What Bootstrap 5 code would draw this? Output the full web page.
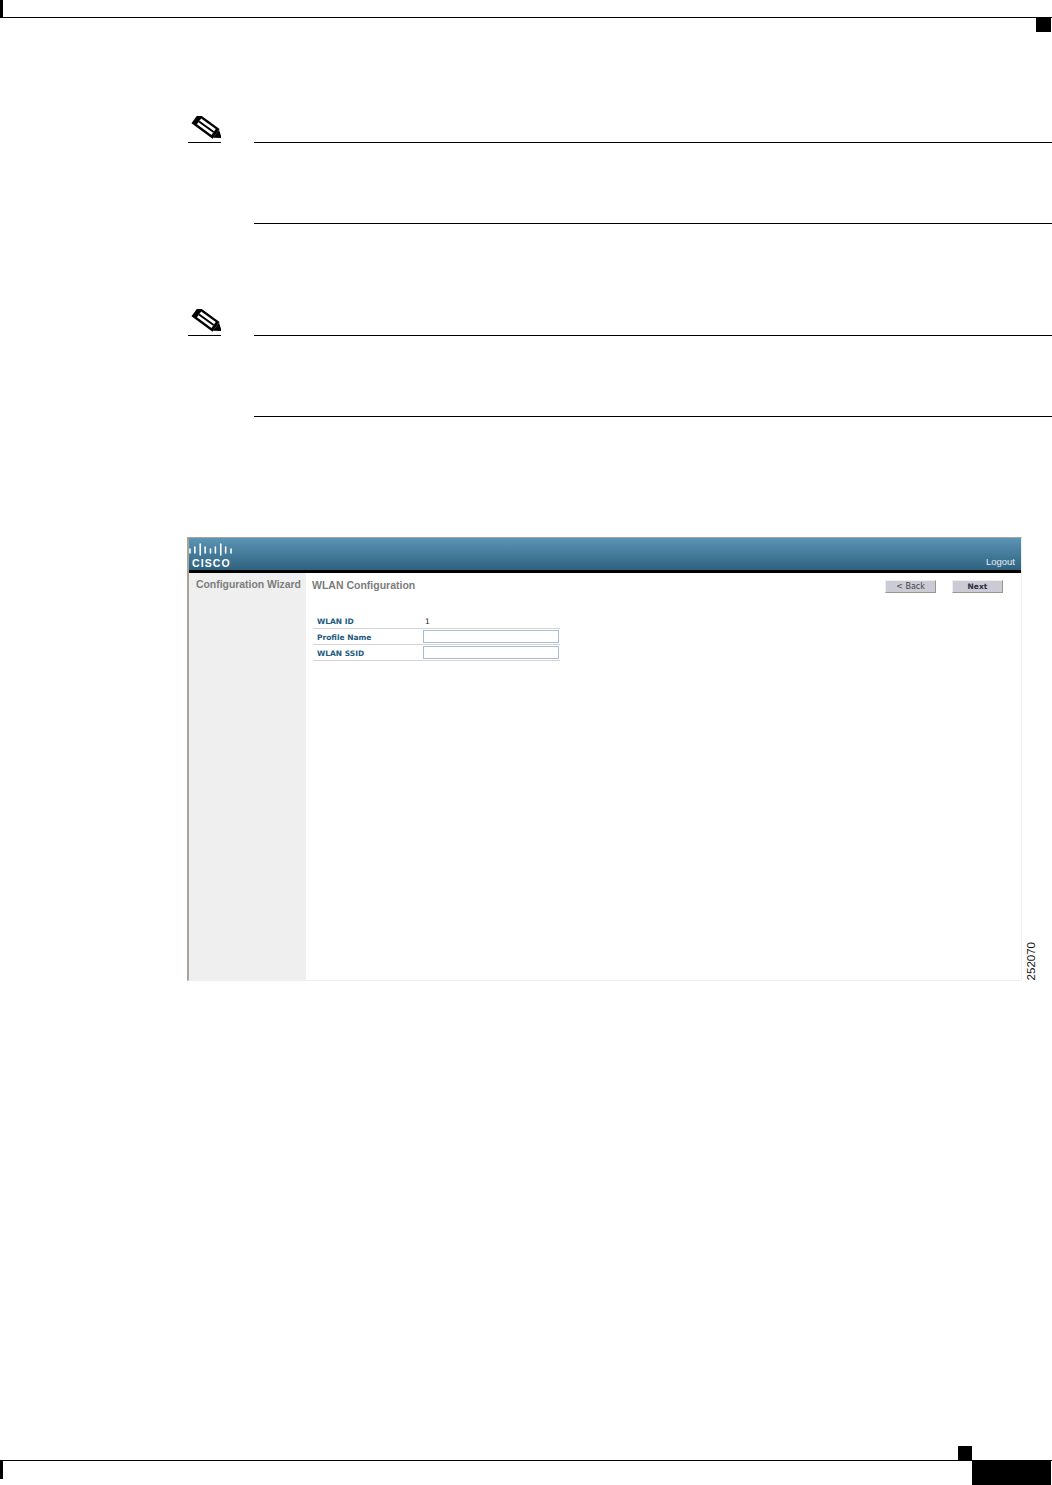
<!DOCTYPE html>
<html lang="en">
<head>
    <meta charset="UTF-8">
    <meta name="viewport" content="width=device-width, initial-scale=1.0">
    <title>WLAN Configuration</title>
    <link rel="stylesheet" href="https://cdn.jsdelivr.net/npm/bootstrap@5.3.0/dist/css/bootstrap.min.css">
    <style>
        body {
            background-color: #fff;
            font-family: "Liberation Sans", Arial, sans-serif;
            height: 1485px;
            overflow: hidden;
        }

        .page-head {
            height: 18px;
            border-bottom: 1px solid #000;
        }

        .crop-left {
            width: 3px;
            height: 17px;
            background-color: #000;
        }

        .crop-right {
            top: 17px;
            right: 1px;
            width: 15px;
            height: 15px;
            background-color: #000;
        }

        .page-body {
            padding-left: 187px;
        }

        .note-box {
            margin-left: 1px;
        }

        .first-note { margin-top: 98px; }
        .second-note { margin-top: 85px; }

        .note-side {
            width: 66px;
        }

        .note-icon {
            display: block;
            width: 33px;
            height: 26px;
            border-bottom: 1px solid #000;
            box-sizing: content-box;
        }

        .note-text {
            margin-top: 26px;
            height: 82px;
            border-top: 1px solid #000;
            border-bottom: 1px solid #000;
        }

        .figure-row {
            margin-top: 120px;
        }

        .shot {
            width: 835px;
            height: 444px;
            border-top: 1px solid #a8a498;
            border-left: 2px solid #a8a498;
            border-right: 1px solid #eeeeee;
            border-bottom: 1px solid #eeeeee;
        }

        .shot-head {
            height: 32px;
            background: linear-gradient(#5b94b6, #2f627f);
        }

        .shot-bar {
            height: 3px;
            background-color: #000;
        }

        .logo-wrap {
            width: 46px;
            padding-top: 5px;
        }

        .logo-bars {
            display: block;
            width: 43px;
            height: 14px;
        }

        .logo-word {
            color: #fff;
            font-size: 10.5px;
            font-weight: 700;
            line-height: 11px;
            letter-spacing: 1.1px;
            padding-left: 3px;
            margin-top: 1px;
        }

        .logout-link {
            color: #e6eef3;
            font-size: 9.5px;
            line-height: 12px;
            padding: 0 6px 2px 0;
        }

        .shot-side {
            width: 117px;
            background-color: #efefef;
            color: #7c7c7c;
            font-size: 10.4px;
            font-weight: 700;
            line-height: 12px;
            padding: 6px 0 0 7px;
            white-space: nowrap;
        }

        .shot-main {
            padding: 6px 18px 0 6px;
        }

        .shot-title {
            color: #7c7c7c;
            font-size: 10.5px;
            font-weight: 700;
            line-height: 12px;
        }

        .shot-btn {
            width: 51px;
            height: 13px;
            margin-top: 1px;
            padding: 0;
            font-family: "DejaVu Sans", sans-serif;
            font-size: 8px;
            line-height: 10px;
            color: #444;
            background-color: #cbcbd6;
            border: 1px solid;
            border-color: #eeeeee #99978a #99978a #eeeeee;
            border-radius: 0;
        }

        .shot-btn.next-btn {
            color: #2c2c40;
            font-size: 7.5px;
            font-weight: 700;
        }

        .wlan-form {
            margin-top: 20px;
            margin-left: 1px;
            width: 247px;
        }

        .wlan-row {
            height: 16px;
            border-bottom: 1px solid #d4d4d4;
        }

        .wlan-label {
            width: 110px;
            padding-left: 4px;
            padding-top: 2px;
            font-family: "DejaVu Sans", sans-serif;
            font-size: 7.5px;
            font-weight: 700;
            color: #215a7e;
        }

        .wlan-value {
            font-family: "DejaVu Sans", sans-serif;
            font-size: 7.5px;
            color: #222;
            padding-left: 2px;
            padding-top: 2px;
        }

        .wlan-input {
            width: 136px;
            height: 13px;
            min-height: 0;
            padding: 0;
            border: 1px solid #a9bdd2;
            border-radius: 0;
        }

        .figure-number {
            writing-mode: vertical-rl;
            transform: rotate(180deg);
            font-size: 11.5px;
            line-height: 12px;
            color: #111;
            margin-left: 3px;
            margin-bottom: 1px;
        }

        .page-foot {
            height: 25px;
            border-top: 1px solid #000;
            margin-top: auto;
        }

        .foot-left {
            width: 3px;
            height: 18px;
            background-color: #000;
        }

        .foot-square {
            top: -15px;
            left: 958px;
            width: 14px;
            height: 14px;
            background-color: #000;
        }

        .foot-block {
            top: -1px;
            left: 972px;
            width: 79px;
            height: 25px;
            background-color: #000;
        }
    </style>
</head>
<body>
<div class="d-flex flex-column" style="height:1485px">

    <div class="page-head position-relative">
        <div class="crop-left"></div>
        <div class="crop-right position-absolute"></div>
    </div>

    <div class="page-body">
        <!-- notes -->
        <div class="note-box first-note d-flex">
            <div class="note-side flex-shrink-0">
                <svg class="note-icon" viewBox="0 0 33 26">
                    <g transform="translate(7 2.5) rotate(36)">
                        <rect x="0" y="-6" width="26" height="12" fill="#000"/>
                        <rect x="5" y="-3.6" width="18" height="7.2" fill="#fff"/>
                        <rect x="5" y="-1" width="18" height="2" fill="#000"/>
                        <polygon points="26,-5 33,0 26,5" fill="#000"/>
                    </g>
                </svg>
            </div>
            <div class="note-text flex-grow-1"></div>
        </div>

        <div class="note-box second-note d-flex">
            <div class="note-side flex-shrink-0">
                <svg class="note-icon" viewBox="0 0 33 26">
                    <g transform="translate(7 2.5) rotate(36)">
                        <rect x="0" y="-6" width="26" height="12" fill="#000"/>
                        <rect x="5" y="-3.6" width="18" height="7.2" fill="#fff"/>
                        <rect x="5" y="-1" width="18" height="2" fill="#000"/>
                        <polygon points="26,-5 33,0 26,5" fill="#000"/>
                    </g>
                </svg>
            </div>
            <div class="note-text flex-grow-1"></div>
        </div>

        <!-- screenshot figure -->
        <div class="figure-row d-flex align-items-end">
            <div class="shot d-flex flex-column flex-shrink-0">
                <div class="shot-head d-flex justify-content-between align-items-end">
                    <div class="logo-wrap align-self-start">
                        <svg class="logo-bars" viewBox="0 0 44 14">
                            <g stroke="#fff" stroke-width="1.6" stroke-linecap="round">
                                <line x1="1" y1="6" x2="1" y2="10"/>
                                <line x1="6" y1="4" x2="6" y2="10"/>
                                <line x1="11.5" y1="1" x2="11.5" y2="12"/>
                                <line x1="16.5" y1="4" x2="16.5" y2="10"/>
                                <line x1="22" y1="6" x2="22" y2="10"/>
                                <line x1="27" y1="4" x2="27" y2="10"/>
                                <line x1="32.5" y1="1" x2="32.5" y2="12"/>
                                <line x1="37.5" y1="4" x2="37.5" y2="10"/>
                                <line x1="43" y1="6" x2="43" y2="10"/>
                            </g>
                        </svg>
                        <div class="logo-word">CISCO</div>
                    </div>
                    <div class="logout-link">Logout</div>
                </div>
                <div class="shot-bar"></div>
                <div class="d-flex flex-grow-1">
                    <div class="shot-side flex-shrink-0">Configuration Wizard</div>
                    <div class="shot-main flex-grow-1">
                        <div class="d-flex justify-content-between align-items-start">
                            <div class="shot-title">WLAN Configuration</div>
                            <div class="d-flex gap-3">
                                <button type="button" class="btn shot-btn">&lt; Back</button>
                                <button type="button" class="btn shot-btn next-btn">Next</button>
                            </div>
                        </div>
                        <div class="wlan-form">
                            <div class="wlan-row d-flex align-items-center">
                                <div class="wlan-label">WLAN ID</div>
                                <div class="wlan-value">1</div>
                            </div>
                            <div class="wlan-row d-flex align-items-center">
                                <div class="wlan-label">Profile Name</div>
                                <input type="text" class="form-control wlan-input">
                            </div>
                            <div class="wlan-row d-flex align-items-center">
                                <div class="wlan-label">WLAN SSID</div>
                                <input type="text" class="form-control wlan-input">
                            </div>
                        </div>
                    </div>
                </div>
            </div>
            <div class="figure-number">252070</div>
        </div>
    </div>

    <div class="page-foot position-relative">
        <div class="foot-left"></div>
        <div class="foot-square position-absolute"></div>
        <div class="foot-block position-absolute"></div>
    </div>
</div>

<script src="https://cdn.jsdelivr.net/npm/bootstrap@5.3.0/dist/js/bootstrap.bundle.min.js"></script>
</body>
</html>
